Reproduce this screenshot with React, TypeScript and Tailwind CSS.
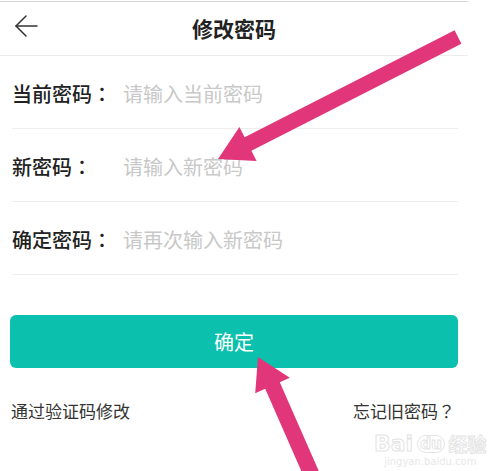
import React from "react";

const font = "font-['Noto_Sans_CJK_SC','Noto_Sans',sans-serif]";
// centred fullwidth punctuation like in the screenshot
const punct = "font-['Noto_Sans_CJK_TC',sans-serif]";

const rows = [
  { label: "当前密码", hint: "请输入当前密码" },
  { label: "新密码", hint: "请输入新密码" },
  { label: "确定密码", hint: "请再次输入新密码" },
];

const App = () => {
  return (
    <div className={`relative w-[493px] h-[471px] overflow-hidden bg-white ${font}`}>
      <div className="w-[468px] pt-px">
        {/* top bar */}
        <div className="border-t border-[#d4d4d4]" />
        <div className="relative flex h-[54px] items-center justify-center border-b border-[#ececec]">
          <svg
            className="absolute left-[14px] top-[12px]"
            width="26"
            height="24"
            viewBox="0 0 26 24"
            fill="none"
            stroke="#333"
            strokeWidth="1.5"
            strokeLinecap="round"
            strokeLinejoin="round"
          >
            <path d="M2 12 H23" />
            <path d="M12 2 L2 12 L12 22" />
          </svg>
          <h1 className="text-[21px] font-bold text-[#222]">修改密码</h1>
        </div>

        {/* form rows */}
        <div className="ml-3 mr-[10px]">
          {rows.map((r) => (
            <div
              key={r.label}
              className="flex h-[73px] items-center border-b border-[#eeeeee] pt-[4px]"
            >
              <span className="w-[111px] shrink-0 text-[20px] font-medium text-[#222]">
                {r.label}
                <span className={punct}>：</span>
              </span>
              <span className="text-[20px] text-[#c8c8c8]">{r.hint}</span>
            </div>
          ))}
        </div>

        {/* submit */}
        <div className="mx-[10px] mt-10 flex h-[53px] items-center justify-center rounded-md bg-[#0bc1ad]">
          <span className="text-[20px] text-white">确定</span>
        </div>

        <div className="mt-[33px] flex items-center justify-between pl-[11px] pr-[13px] text-[17px] leading-5 text-[#333]">
          <span>通过验证码修改</span>
          <span>
            忘记旧密码<span className={punct}>？</span>
          </span>
        </div>
      </div>

      {/* watermark */}
      <div className="absolute left-[374px] top-[432px] flex flex-col items-center text-transparent [-webkit-text-stroke:1px_#e4e4e4]">
        <div className="flex items-center gap-1 text-[22px] font-bold leading-6 font-['DejaVu_Sans',sans-serif]">
          <span>Bai</span>
          <span className="rounded-full border border-[#e4e4e4] px-[2px] text-[15px] leading-4">du</span>
          <span className="text-[19px] font-['Noto_Sans_CJK_SC',sans-serif]">经验</span>
        </div>
        <div className="text-[10px] leading-3 text-[#e8e8e8] [-webkit-text-stroke:0px] font-['DejaVu_Sans',sans-serif]">
          jingyan.baidu.com
        </div>
      </div>

      {/* annotation arrows */}
      <svg
        className="pointer-events-none absolute left-0 top-0"
        width="493"
        height="471"
        viewBox="0 0 493 471"
      >
        <polygon
          fill="#e1377a"
          points="454.6,30.3 461.4,43.7 251.4,150.7 256.6,160.9 218,159 239.4,127.1 244.6,137.3"
        />
        <polygon
          fill="#e1377a"
          points="258,357 289.8,377.7 279.8,382.2 321.3,476.7 306.7,483.3 265.2,388.8 255.2,393.3"
        />
      </svg>
    </div>
  );
};

export default App;
